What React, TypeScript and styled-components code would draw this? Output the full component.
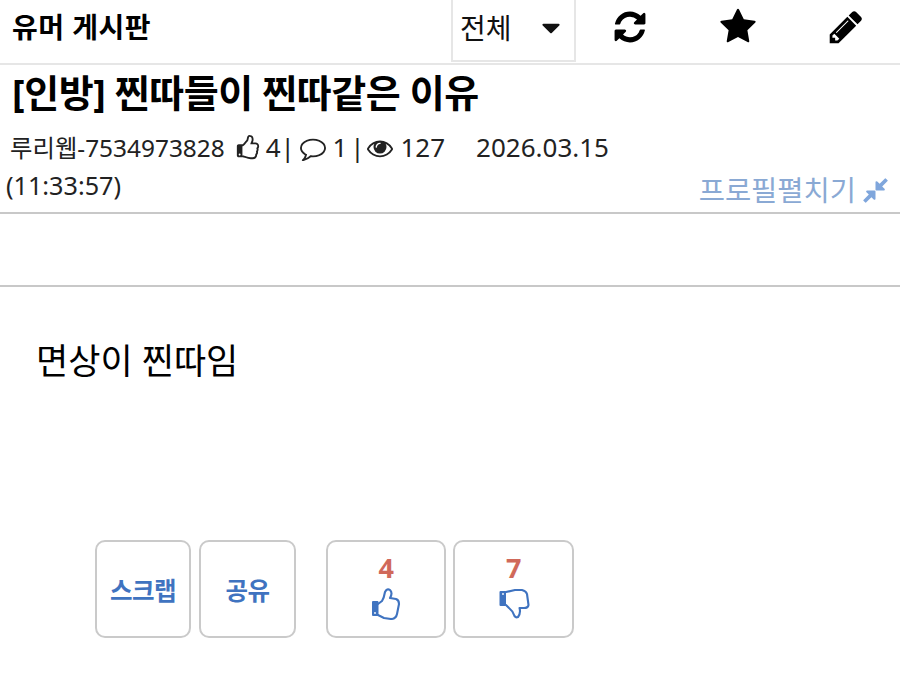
import React from 'react';
import styled, { createGlobalStyle } from 'styled-components';

const GlobalStyle = createGlobalStyle`
  html, body {
    margin: 0;
    padding: 0;
    background: #fff;
    color: #111;
    font-family: "Noto Sans", "Noto Sans CJK KR", sans-serif;
  }
`;

// font-awesome 4 glyphs, the react-icons sets only carry the newer shapes
const GLYPHS = {
  refresh:
    'M1639 1056q0 5-1 7-64 268-268 434.5t-478 166.5q-146 0-282.5-55t-243.5-157l-129 129q-19 19-45 19t-45-19-19-45v-448q0-26 19-45t45-19h448q26 0 45 19t19 45-19 45l-137 137q71 66 161 102t187 36q134 0 250-65t186-179q11-17 53-117 8-23 30-23h192q13 0 22.5 9.5t9.5 22.5zm25-800v448q0 26-19 45t-45 19h-448q-26 0-45-19t-19-45 19-45l138-138q-148-137-349-137-134 0-250 65t-186 179q-11 17-53 117-8 23-30 23h-199q-13 0-22.5-9.5t-9.5-22.5v-7q65-268 270-434.5t480-166.5q146 0 284 55.5t245 156.5l130-129q19-19 45-19t45 19 19 45z',
  star: 'M1728 647q0 22-26 48l-363 354 86 500q1 7 1 20 0 21-10.5 35.5t-30.5 14.5q-19 0-40-12l-449-236-449 236q-22 12-40 12-21 0-31.5-14.5t-10.5-35.5q0-6 2-20l86-500-364-354q-25-27-25-48 0-37 56-46l502-73 225-455q19-41 49-41t49 41l225 455 502 73q56 9 56 46z',
  pencil:
    'M491 1536l91-91-235-235-91 91v107h128v128h107zm523-928q0-22-22-22-10 0-17 7l-542 542q-7 7-7 17 0 22 22 22 10 0 17-7l542-542q7-7 7-17zm-54-192l416 416-832 832h-416v-416zm683 96q0 53-37 90l-166 166-416-416 166-165q36-38 90-38 53 0 91 38l235 234q37 39 37 91z',
  caret:
    'M1408 704q0 26-19 45l-448 448q-19 19-45 19t-45-19l-448-448q-19-19-19-45t19-45 45-19h896q26 0 45 19t19 45z',
  thumb:
    'M384 1344q0-26-19-45t-45-19-45 19-19 45 19 45 45 19 45-19 19-45zm1152-576q0-51-39.5-89.5t-89.5-38.5h-352q0-58 48-159.5t48-160.5q0-98-32-145t-128-47q-26 26-38 85t-30.5 125.5-59.5 109.5q-22 23-77 91-4 5-23 30t-31.5 41-34.5 42.5-40 44-38.5 35.5-40 27-35.5 9h-32v640h32q13 0 31.5 3t33 6.5 38 11 35 11.5 35.5 12.5 29 10.5q211 73 342 73h121q192 0 192-167 0-26-5-56 30-16 47.5-52.5t17.5-73.5-18-69q53-50 53-119 0-25-10-55.5t-25-47.5q32-1 53.5-47t21.5-81zm128-1q0 89-49 163 9 33 9 69 0 77-38 144 3 21 3 43 0 101-60 178 1 139-85 219.5t-227 80.5h-129q-96 0-189.5-22.5t-216.5-65.5q-116-40-138-40h-288q-53 0-90.5-37.5t-37.5-90.5v-640q0-53 37.5-90.5t90.5-37.5h274q36-24 137-155 58-75 107-128 24-25 35.5-85.5t30.5-126.5 62-108q39-37 90-37 84 0 151 32.5t102 101.5 35 186q0 93-48 192h176q104 0 180 76t76 179z',
  comment:
    'M896 384q-204 0-381.5 69.5t-282 187.5-104.5 255q0 112 71.5 213.5t201.5 175.5l87 50-27 96q-24 91-70 172 152-63 275-171l43-38 57 6q69 8 130 8 204 0 381.5-69.5t282-187.5 104.5-255-104.5-255-282-187.5-381.5-69.5zm896 512q0 174-120 321.5t-326 233-450 85.5q-70 0-145-8-198 175-460 242-49 14-114 22h-5q-15 0-27-10.5t-16-27.5v-1q-3-4-.5-12t2-10 4.5-9.5l6-9 7-8.5 8-9q7-8 31-34.5t34.5-38 31-39.5 32.5-51 27-59 26-76q-157-89-247.5-220t-90.5-281q0-174 120-321.5t326-233 450-85.5 450 85.5 326 233 120 321.5z',
  eye: 'M1664 960q-152-236-381-353 61 104 61 225 0 185-131.5 316.5t-316.5 131.5-316.5-131.5-131.5-316.5q0-121 61-225-229 117-381 353 133 205 333.5 326.5t434.5 121.5 434.5-121.5 333.5-326.5zm-720-384q0-20-14-34t-34-14q-125 0-214.5 89.5t-89.5 214.5q0 20 14 34t34 14 34-14 14-34q0-86 61-147t147-61q20 0 34-14t14-34zm848 384q0 34-20 69-140 230-376.5 368.5t-499.5 138.5-499.5-139-376.5-368q-20-35-20-69t20-69q140-229 376.5-368t499.5-139 499.5 139 376.5 368q20 35 20 69z',
  compress:
    'M896 960v448q0 26-19 45t-45 19-45-19l-144-144-332 332q-10 10-23 10t-23-10l-114-114q-10-10-10-23t10-23l332-332-144-144q-19-19-19-45t19-45 45-19h448q26 0 45 19t19 45zm755-672q0 13-10 23l-332 332 144 144q19 19 19 45t-19 45-45 19h-448q-26 0-45-19t-19-45v-448q0-26 19-45t45-19 45 19l144 144 332-332q10-10 23-10t23 10l114 114q10 10 10 23z',
};

function Fa({ name, size }: { name: keyof typeof GLYPHS; size: number }) {
  return (
    <svg width={size} height={size} viewBox="0 0 1792 1792" fill="currentColor">
      <path d={GLYPHS[name]} />
    </svg>
  );
}

const Page = styled.div`
  width: 900px;
  height: 676px;
  overflow: hidden;
`;

const TopBar = styled.header`
  display: flex;
  height: 63px;
  border-bottom: 2px solid #e6e6e6;
`;

const BoardName = styled.div`
  width: 451px;
  box-sizing: border-box;
  padding: 7px 0 0 12px;
  font-size: 28px;
  font-weight: 700;
  line-height: 40px;
  letter-spacing: 0.5px;
  color: #000;
`;

const Select = styled.div`
  width: 125px;
  height: 62px;
  box-sizing: border-box;
  display: flex;
  align-items: center;
  justify-content: space-between;
  padding: 0 8px 6px 7px;
  border-left: 2px solid #e6e6e6;
  border-right: 2px solid #e6e6e6;
  border-bottom: 2px solid #e6e6e6;
  font-size: 28px;
  svg {
    margin-top: 2px;
  }
`;

const IconCell = styled.div`
  width: 108px;
  display: flex;
  align-items: center;
  justify-content: center;
  padding-bottom: 9px;
  color: #000;
`;

const Title = styled.h1`
  margin: 0;
  padding: 2px 0 0 12px;
  height: 58px;
  box-sizing: border-box;
  font-size: 38px;
  line-height: 50px;
  font-weight: 700;
  letter-spacing: -0.45px;
  color: #000;
`;

const Meta = styled.div`
  height: 91px;
  box-sizing: border-box;
  position: relative;
  border-bottom: 2px solid #c8c8c8;
  padding-left: 6px;
  font-size: 26px;
  line-height: 39px;
  color: #222;
`;

const MetaLine = styled.div`
  display: flex;
  align-items: center;
  padding-left: 4px;
  padding-top: 5px;
  white-space: pre;
`;

const Author = styled.span`
  font-size: 24.4px;
`;

const MetaIcon = styled.span<{ $left: number; $right: number }>`
  display: inline-flex;
  margin: 0 ${p => p.$right}px 0 ${p => p.$left}px;
`;

const Sep = styled.span<{ $left: number }>`
  width: 6px;
  margin-left: ${p => p.$left}px;
  display: flex;
  justify-content: center;
`;

const DateText = styled.span`
  margin-left: 31px;
`;

const Time = styled.div`
  font-size: 25.2px;
  margin-top: -1px;
`;

const Unfold = styled.div`
  position: absolute;
  right: 10px;
  bottom: 2px;
  display: flex;
  align-items: center;
  gap: 5px;
  color: #8aa9d4;
  font-size: 28.5px;
  line-height: 40px;
  svg {
    color: #7fa6dc;
  }
`;

const Spacer = styled.div`
  height: 71px;
  border-bottom: 2px solid #c8c8c8;
`;

const Body = styled.div`
  height: 253px;
  box-sizing: border-box;
  padding: 50px 0 0 36px;
  font-size: 35px;
  line-height: 48px;
  color: #000;
`;

const Actions = styled.div`
  display: flex;
  padding-left: 95px;
`;

const Btn = styled.div<{ $w: number; $gap: number }>`
  width: ${p => p.$w}px;
  height: 98px;
  margin-left: ${p => p.$gap}px;
  box-sizing: border-box;
  border: 2px solid #cacaca;
  border-radius: 10px;
  display: flex;
  flex-direction: column;
  align-items: center;
  justify-content: center;
  color: #3f73c0;
  font-size: 24.5px;
  font-weight: 700;
  letter-spacing: -0.5px;
`;

const VoteBtn = styled(Btn)`
  justify-content: flex-start;
  padding-top: 11px;
`;

const Count = styled.div`
  color: #d0695a;
  font-size: 27px;
  line-height: 30px;
  font-weight: 700;
`;

const ThumbIcon = styled.svg`
  fill: none;
  stroke: #3f73c0;
  stroke-width: 2.1;
  stroke-linejoin: round;
  stroke-linecap: round;
  margin-top: 5px;
`;

const Cuff = styled.rect`
  fill: #3f73c0;
  stroke: none;
`;

const CuffDot = styled.circle`
  fill: #fff;
  stroke: none;
`;

export default function App() {
  return (
    <Page>
      <GlobalStyle />
      <TopBar>
        <BoardName>유머 게시판</BoardName>
        <Select>
          전체
          <Fa name="caret" size={30} />
        </Select>
        <IconCell><Fa name="refresh" size={36} /></IconCell>
        <IconCell><Fa name="star" size={38} /></IconCell>
        <IconCell><Fa name="pencil" size={38} /></IconCell>
      </TopBar>
      <Title>[인방] 찐따들이 찐따같은 이유</Title>
      <Meta>
        <MetaLine>
          <Author>루리웹-7534973828</Author>
          <MetaIcon $left={10} $right={5}><Fa name="thumb" size={26} /></MetaIcon>4
          <Sep $left={4}>|</Sep>
          <MetaIcon $left={9} $right={7}><Fa name="comment" size={26} /></MetaIcon>1
          <Sep $left={7}>|</Sep>
          <MetaIcon $left={7} $right={7}><Fa name="eye" size={26} /></MetaIcon>127
          <DateText>2026.03.15</DateText>
        </MetaLine>
        <Time>(11:33:57)</Time>
        <Unfold>
          프로필펼치기
          <Fa name="compress" size={29} />
        </Unfold>
      </Meta>
      <Spacer />
      <Body>면상이 찐따임</Body>
      <Actions>
        <Btn $w={96} $gap={0}>스크랩</Btn>
        <Btn $w={97} $gap={8}>공유</Btn>
        <VoteBtn $w={120} $gap={30}>
          <Count>4</Count>
          <ThumbIcon width="30" height="32" viewBox="11 8 30 32">
            <Cuff x="12" y="21" width="6.5" height="15" rx="1" />
            <CuffDot cx="15" cy="33" r="0.9" />
            <path d="M18 24L22 21Q24 18 25 12Q27 8 30 10Q33 13 30 18L36 19Q39 20 39 24L37 34Q36 39 31 39L24 38L18 35" />
          </ThumbIcon>
        </VoteBtn>
        <VoteBtn $w={121} $gap={7}>
          <Count>7</Count>
          <ThumbIcon width="32" height="31" viewBox="8 11 32 31">
            <Cuff x="9.5" y="14" width="6.5" height="15" rx="1" />
            <CuffDot cx="13" cy="17" r="0.9" />
            <path d="M16 15L25 13L32 13Q36 14 37 17L38.5 28Q38 31 34 31L29.5 31Q31 36 28 40Q26 41 24.5 39Q23 34 19 31L16 28" />
          </ThumbIcon>
        </VoteBtn>
      </Actions>
    </Page>
  );
}
